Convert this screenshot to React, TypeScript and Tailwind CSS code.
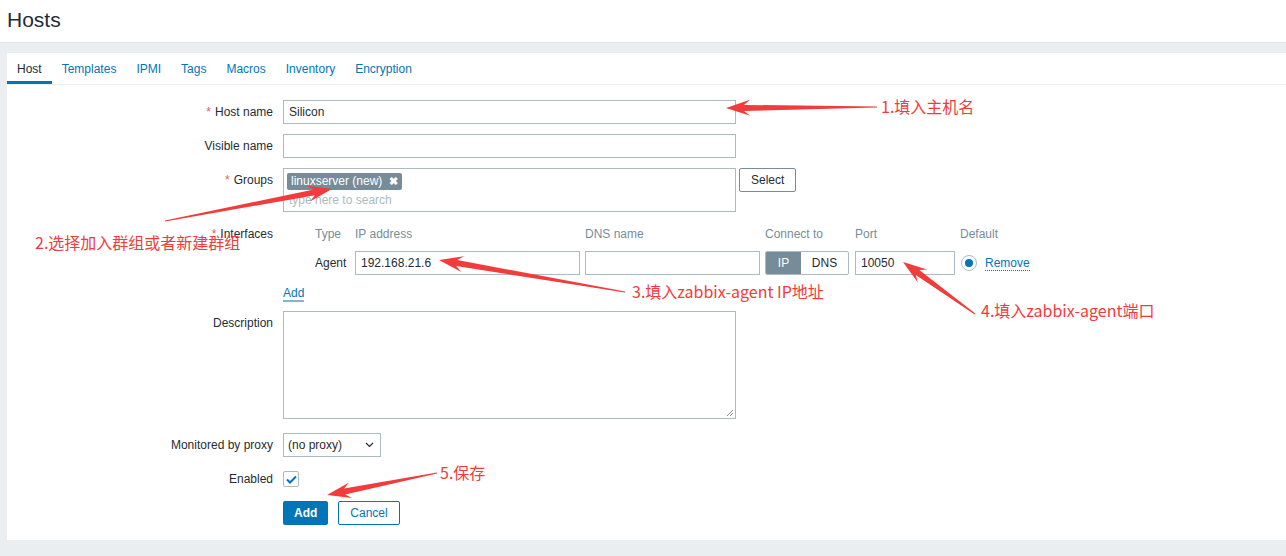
import React from "react";

const RED = "#f23b3b";

// tapered arrow polygon, thin at the tail, head at (x2,y2)
function arrow(x1: number, y1: number, x2: number, y2: number) {
  const dx = x2 - x1;
  const dy = y2 - y1;
  const len = Math.hypot(dx, dy);
  const ux = dx / len;
  const uy = dy / len;
  const nx = -uy;
  const ny = ux;
  const headLen = 24;
  const headW = 8;
  const shaftW = 3;
  const bx = x2 - ux * headLen;
  const by = y2 - uy * headLen;
  const nbx = x2 - ux * (headLen - 6);
  const nby = y2 - uy * (headLen - 6);
  const p = (x: number, y: number) => `${x.toFixed(1)},${y.toFixed(1)}`;
  return [
    p(x1 + nx * 0.5, y1 + ny * 0.5),
    p(nbx + nx * shaftW, nby + ny * shaftW),
    p(bx + nx * headW, by + ny * headW),
    p(x2, y2),
    p(bx - nx * headW, by - ny * headW),
    p(nbx - nx * shaftW, nby - ny * shaftW),
    p(x1 - nx * 0.5, y1 - ny * 0.5),
  ].join(" ");
}

const arrows = [
  [877, 107, 726, 108],
  [165, 221, 332, 189],
  [625, 292, 439, 260],
  [975, 314, 903, 262],
  [437, 473, 327, 495],
];

const notes = [
  { text: "1.填入主机名", left: 881, top: 95 },
  { text: "2.选择加入群组或者新建群组", left: 35, top: 231 },
  { text: "3.填入zabbix-agent IP地址", left: 632, top: 280 },
  { text: "4.填入zabbix-agent端口", left: 981, top: 299 },
  { text: "5.保存", left: 440, top: 461 },
];

const tabs = ["Host", "Templates", "IPMI", "Tags", "Macros", "Inventory", "Encryption"];

function Label({ text, req }: { text: string; req?: boolean }) {
  return (
    <div className="w-[266px] shrink-0 text-right leading-[24px] text-[#1f2c33]">
      {req && <span className="mr-[4px] text-[#e45959]">*</span>}
      {text}
    </div>
  );
}

function Input({ value, w, placeholder }: { value?: string; w: string; placeholder?: string }) {
  return (
    <div className={`${w} h-[24px] border border-[#acbbc2] bg-white px-[5px] leading-[22px] text-[#1f2c33]`}>
      {value ?? <span className="text-[#acbbc2]">{placeholder}</span>}
    </div>
  );
}

export default function App() {
  return (
    <div
      className="relative h-[556px] w-[1286px] overflow-hidden bg-[#ebeef0] text-[12px] text-[#1f2c33]"
      style={{ fontFamily: '"Liberation Sans", Arial, sans-serif' }}
    >
      <div className="h-[43px] border-b border-[#dfe4e7] bg-white pl-[7px]">
        <h1 className="text-[21px] font-normal leading-[40px] text-[#1f2c33]">Hosts</h1>
      </div>

      <div className="ml-[7px] mt-[10px] h-[487px] bg-white">
        <div className="flex h-[32px] border-b border-[#ebeef0]">
          {tabs.map((t, i) => (
            <div
              key={t}
              className={
                i === 0
                  ? "border-b-[3px] border-[#0275b8] px-[10px] pt-[2px] leading-[28px] text-[#1f2c33]"
                  : "px-[10px] pt-[2px] leading-[28px] text-[#0275b8]"
              }
            >
              {t}
            </div>
          ))}
        </div>

        <div className="flex flex-col pt-[15px]">
          <div className="flex gap-[10px]">
            <Label text="Host name" req />
            <Input value="Silicon" w="w-[453px]" />
          </div>

          <div className="mt-[10px] flex gap-[10px]">
            <Label text="Visible name" />
            <Input value="" w="w-[453px]" />
          </div>

          <div className="mt-[10px] flex gap-[10px]">
            <Label text="Groups" req />
            <div className="h-[44px] w-[453px] border border-[#acbbc2] px-[3px] pt-[3px]">
              <div className="inline-flex h-[17px] items-center gap-[7px] rounded-[2px] bg-[#768d99] px-[4px] text-white">
                <span>linuxserver (new)</span>
                <span className="text-[11px] font-bold">✖</span>
              </div>
              <div className="mt-[1px] pl-[2px] leading-[18px] text-[#acbbc2]">type here to search</div>
            </div>
            <button className="-ml-[7px] h-[24px] rounded-[2px] border border-[#768d99] bg-white px-[11px] text-[#1f2c33]">
              Select
            </button>
          </div>

          <div className="mt-[10px] flex gap-[10px]">
            <Label text="Interfaces" req />
            <div className="flex flex-col">
              <div className="flex h-[24px] items-center gap-[5px] text-[#768d99]">
                <div className="w-[67px] pl-[32px]">Type</div>
                <div className="w-[225px]">IP address</div>
                <div className="w-[175px]">DNS name</div>
                <div className="w-[85px]">Connect to</div>
                <div className="w-[100px]">Port</div>
                <div>Default</div>
              </div>
              <div className="mt-[5px] flex h-[24px] items-center gap-[5px]">
                <div className="w-[67px] pl-[32px]">Agent</div>
                <Input value="192.168.21.6" w="w-[225px]" />
                <Input value="" w="w-[175px]" />
                <div className="flex h-[24px] w-[84px] overflow-hidden rounded-[2px] border border-[#acbbc2]">
                  <div className="w-[35px] bg-[#768d99] text-center leading-[22px] text-white">IP</div>
                  <div className="flex-1 text-center leading-[22px] text-[#1f2c33]">DNS</div>
                </div>
                <div className="ml-[1px]">
                  <Input value="10050" w="w-[100px]" />
                </div>
                <div className="ml-[1px] flex h-[16px] w-[16px] items-center justify-center rounded-full border border-[#acbbc2]">
                  <div className="h-[8px] w-[8px] rounded-full bg-[#0275b8]" />
                </div>
                <div className="ml-[3px] border-b border-dotted border-[#0275b8] leading-[14px] text-[#0275b8]">Remove</div>
              </div>
              <div className="mt-[11px] self-start border-b-2 border-[#7fb5d9] leading-[14px] text-[#0275b8]">Add</div>
            </div>
          </div>

          <div className="mt-[9px] flex gap-[10px]">
            <Label text="Description" />
            <div className="relative h-[108px] w-[453px] border border-[#acbbc2]">
              <svg className="absolute bottom-[1px] right-[1px]" width="8" height="8" viewBox="0 0 8 8">
                <path d="M7 1L1 7M7 4L4 7" stroke="#8a8a8a" strokeWidth="1" />
              </svg>
            </div>
          </div>

          <div className="mt-[14px] flex gap-[10px]">
            <Label text="Monitored by proxy" />
            <div className="flex h-[24px] w-[98px] items-center justify-between border border-[#acbbc2] pl-[4px] pr-[6px]">
              <span>(no proxy)</span>
              <svg width="9" height="6" viewBox="0 0 9 6">
                <path d="M1 1l3.5 3.5L8 1" fill="none" stroke="#1f2c33" strokeWidth="1.2" />
              </svg>
            </div>
          </div>

          <div className="mt-[10px] flex gap-[10px]">
            <Label text="Enabled" />
            <div className="flex h-[24px] items-center">
              <div className="flex h-[16px] w-[16px] items-center justify-center rounded-[2px] border border-[#acbbc2]">
                <svg width="11" height="9" viewBox="0 0 11 9">
                  <path d="M1 4.5l3 3L10 1.5" fill="none" stroke="#0275b8" strokeWidth="2" />
                </svg>
              </div>
            </div>
          </div>

          <div className="mt-[10px] flex gap-[10px] pl-[276px]">
            <button className="h-[24px] rounded-[2px] bg-[#0275b8] px-[11px] font-bold text-white">Add</button>
            <button className="h-[24px] rounded-[2px] border border-[#0275b8] bg-white px-[11px] text-[#0275b8]">
              Cancel
            </button>
          </div>
        </div>
      </div>

      <svg className="pointer-events-none absolute left-0 top-0" width="1286" height="556">
        {arrows.map((a, i) => (
          <polygon key={i} points={arrow(a[0], a[1], a[2], a[3])} fill={RED} />
        ))}
      </svg>
      {notes.map((n) => (
        <div
          key={n.text}
          className="absolute whitespace-nowrap text-[16px] leading-[22px]"
          style={{
            left: n.left,
            top: n.top,
            color: RED,
            fontFamily: '"Noto Sans CJK SC", "Liberation Sans", sans-serif',
          }}
        >
          {n.text}
        </div>
      ))}
    </div>
  );
}
